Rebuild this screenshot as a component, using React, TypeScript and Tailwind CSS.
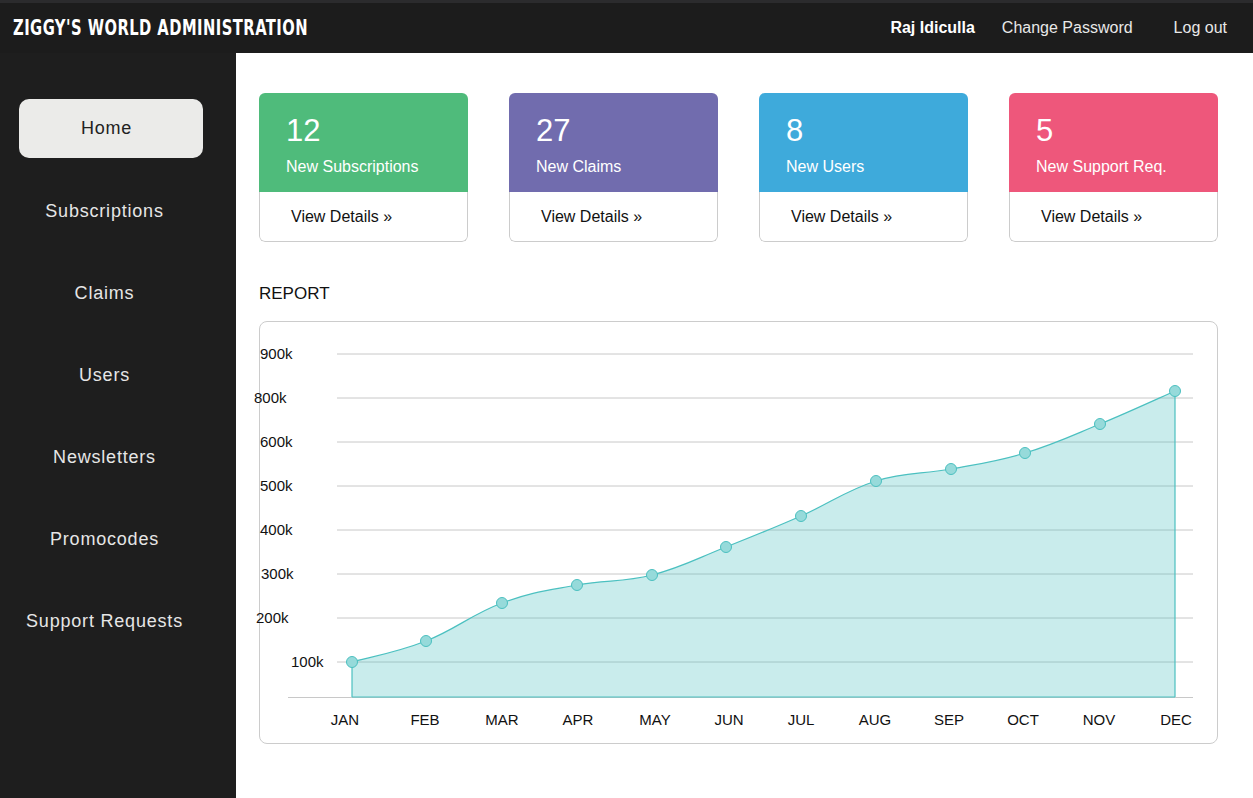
import React from "react";

const pts: [number, number][] = [
  [352, 662],
  [426, 641],
  [502, 603],
  [577, 585],
  [652, 575],
  [726, 547],
  [801, 516],
  [876, 481],
  [951, 469],
  [1025, 453],
  [1100, 424],
  [1175, 391],
];

function smoothPath(p: [number, number][], t = 0.4) {
  let d = `M${p[0][0]},${p[0][1]}`;
  for (let i = 0; i < p.length - 1; i++) {
    const p0 = p[i - 1] || p[i];
    const p1 = p[i];
    const p2 = p[i + 1];
    const p3 = p[i + 2] || p2;
    const c1x = p1[0] + ((p2[0] - p0[0]) * t) / 2;
    const c1y = p1[1] + ((p2[1] - p0[1]) * t) / 2;
    const c2x = p2[0] - ((p3[0] - p1[0]) * t) / 2;
    const c2y = p2[1] - ((p3[1] - p1[1]) * t) / 2;
    d += ` C${c1x},${c1y} ${c2x},${c2y} ${p2[0]},${p2[1]}`;
  }
  return d;
}

const grid = [
  { y: 354, label: "900k", x: 260 },
  { y: 398, label: "800k", x: 254 },
  { y: 442, label: "600k", x: 260 },
  { y: 486, label: "500k", x: 260 },
  { y: 530, label: "400k", x: 260 },
  { y: 574, label: "300k", x: 261 },
  { y: 618, label: "200k", x: 256 },
  { y: 662, label: "100k", x: 291 },
];

const months = [
  ["JAN", 345],
  ["FEB", 425],
  ["MAR", 502],
  ["APR", 578],
  ["MAY", 655],
  ["JUN", 729],
  ["JUL", 801],
  ["AUG", 875],
  ["SEP", 949],
  ["OCT", 1023],
  ["NOV", 1099],
  ["DEC", 1176],
] as const;

const cards = [
  { n: "12", label: "New Subscriptions", cls: "bg-[#4fbb7b]" },
  { n: "27", label: "New Claims", cls: "bg-[#716cae]" },
  { n: "8", label: "New Users", cls: "bg-[#3eaadb]" },
  { n: "5", label: "New Support Req.", cls: "bg-[#ee577b]" },
];

const nav = ["Subscriptions", "Claims", "Users", "Newsletters", "Promocodes", "Support Requests"];

function Chart() {
  const line = smoothPath(pts);
  const area = `${line} L1175,697 L352,697 Z`;
  return (
    <svg
      className="absolute -left-px -top-px overflow-visible"
      width={959}
      height={423}
      viewBox="259 321 959 423"
    >
      {grid.map((g) => (
        <g key={g.label}>
          <line x1={337} x2={1193} y1={g.y} y2={g.y} stroke="#c8c8c8" strokeWidth={1} />
          <text
            x={g.x}
            y={g.y + 5}
            fontSize={15}
            fill="#111"
            fontFamily="'Liberation Sans', Arial, sans-serif"
          >
            {g.label}
          </text>
        </g>
      ))}
      <line x1={288} x2={1193} y1={697.5} y2={697.5} stroke="#c8c8c8" strokeWidth={1} />
      <path d={area} fill="rgba(75,192,192,0.3)" />
      <path d={line} fill="none" stroke="#4bc0c0" strokeWidth={1.2} />
      <line x1={352} x2={352} y1={662} y2={697} stroke="#4bc0c0" strokeWidth={1.2} />
      <line x1={1175} x2={1175} y1={391} y2={697} stroke="#4bc0c0" strokeWidth={1.2} />
      <line x1={352} x2={1175} y1={697} y2={697} stroke="#4bc0c0" strokeWidth={1} />
      {pts.map(([x, y]) => (
        <circle key={x} cx={x} cy={y} r={5.5} fill="#96dada" stroke="#4bc0c0" strokeWidth={1} />
      ))}
      {months.map(([m, x]) => (
        <text
          key={m}
          x={x}
          y={725}
          fontSize={15}
          textAnchor="middle"
          fill="#111"
          fontFamily="'Liberation Sans', Arial, sans-serif"
        >
          {m}
        </text>
      ))}
    </svg>
  );
}

export default function App() {
  return (
    <div className="w-[1253px] h-[798px] overflow-hidden bg-white font-['Liberation_Sans',Arial,sans-serif]">
      <header className="h-[53px] bg-[#1c1c1c] border-t-[3px] border-[#2b2b2d] flex items-center justify-between pl-[13px] pr-[26px]">
        <div className="text-white font-bold text-[21px] tracking-[0.6px] leading-none font-['DejaVu_Sans_Condensed','Liberation_Sans_Narrow','Liberation_Sans',sans-serif] [font-stretch:condensed] origin-left scale-x-[0.78] whitespace-nowrap">
          ZIGGY'S WORLD ADMINISTRATION
        </div>
        <nav className="flex items-center text-[16px] text-[#e8e8e8]">
          <span className="font-bold text-white">Raj Idiculla</span>
          <span className="ml-[27px]">Change Password</span>
          <span className="ml-[41px]">Log out</span>
        </nav>
      </header>
      <div className="flex">
        <aside className="w-[236px] h-[745px] bg-[#1e1e1e] pt-[46px] pl-[19px] shrink-0">
          <div className="w-[184px] h-[59px] rounded-[10px] bg-[#ebebe9] text-[#222] flex items-center justify-center pr-[9px] text-[18px] tracking-[0.8px]">
            Home
          </div>
          <div className="flex flex-col w-[184px] mt-[12px]">
            {nav.map((n) => (
              <div
                key={n}
                className="h-[82px] flex items-center justify-center pr-[13px] text-[18px] tracking-[0.8px] text-[#e6e6e6] whitespace-nowrap"
              >
                {n}
              </div>
            ))}
          </div>
        </aside>
        <main className="flex-1 pl-[23px] pr-[35px] pt-[40px]">
          <div className="grid grid-cols-4 gap-[41px]">
            {cards.map((c) => (
              <div key={c.label} className="rounded-[6px] overflow-hidden">
                <div className={`${c.cls} h-[99px] pl-[27px] pt-[20px] text-white`}>
                  <div className="text-[31px] leading-[36px]">{c.n}</div>
                  <div className="text-[16px] leading-[20px] mt-[8px]">{c.label}</div>
                </div>
                <div className="h-[50px] border border-t-0 border-[#cccccc] rounded-b-[6px] flex items-center pl-[31px] text-[16px] text-[#111]">
                  View Details »
                </div>
              </div>
            ))}
          </div>
          <div className="mt-[42px] text-[17px] text-[#111] leading-[20px]">REPORT</div>
          <div className="relative mt-[17px] h-[423px] border border-[#cccccc] rounded-[8px]">
            <Chart />
          </div>
        </main>
      </div>
    </div>
  );
}
